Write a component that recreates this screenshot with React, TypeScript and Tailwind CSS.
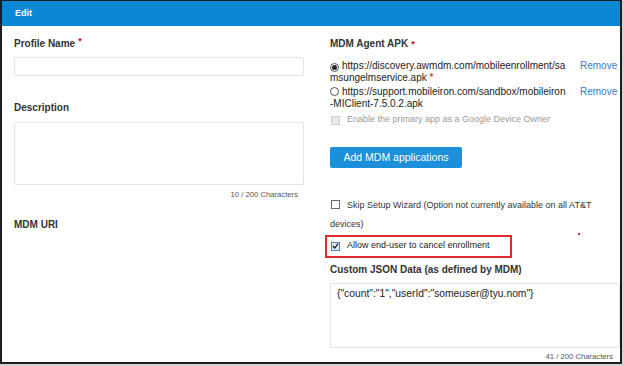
import React from "react";

const F = { fontFamily: '"Liberation Sans", Arial, sans-serif' };

function Radio({ checked }: { checked?: boolean }) {
  return (
    <span className="inline-flex items-center justify-center w-[9px] h-[9px] rounded-full border border-[#555] bg-white mr-[3px] align-[-1px]">
      {checked && <span className="w-[5px] h-[5px] rounded-full bg-[#222]" />}
    </span>
  );
}

function Box({ kind }: { kind: "off" | "disabled" | "on" }) {
  if (kind === "on") {
    return (
      <span className="inline-flex w-[9px] h-[9px] border border-[#4a87c4] bg-[#dbeafa] items-center justify-center">
        <svg width="8" height="8" viewBox="0 0 8 8">
          <path d="M1 4 L3.2 6.3 L7 1.2" stroke="#1a1a1a" strokeWidth="1.4" fill="none" />
        </svg>
      </span>
    );
  }
  if (kind === "disabled") {
    return <span className="inline-block w-[9px] h-[9px] border border-[#cfcfcf] bg-[#e9e9e9]" />;
  }
  return <span className="inline-block w-[9px] h-[9px] border border-[#6b6b6b] bg-white" />;
}

export default function App() {
  return (
    <div className="w-[624px] h-[366px] bg-[#d4d4d4]" style={F}>
      <div className="w-[622px] h-[364px] border-l-2 border-t border-r-2 border-b-2 border-[#1e1e1e] bg-white overflow-hidden flex flex-col">
        <div className="h-[25px] bg-[#0a88d4] flex items-center pl-[13px] text-white text-[9px] font-bold">Edit</div>
        <div className="flex pl-[12px] gap-[26px] text-[#333]">
          {/* Left column */}
          <div className="w-[290px] flex flex-col">
            <div className="mt-[12px] h-[12px] leading-[12px] text-[10px] font-bold">
              Profile Name<span className="text-[#d0021b] text-[9px] relative -top-[3px] ml-[3px]">*</span>
            </div>
            <div className="mt-[7px] h-[19px] border border-[#e3e3e3] rounded-[2px]" />
            <div className="mt-[26px] h-[12px] leading-[12px] text-[10px] font-bold">Description</div>
            <div className="mt-[8px] h-[63px] border border-[#e3e3e3] rounded-[2px]" />
            <div className="mt-[5px] h-[10px] leading-[10px] text-[7.7px] text-[#555] text-right pr-[6px]">10 / 200 Characters</div>
            <div className="mt-[19px] h-[12px] leading-[12px] text-[10px] font-bold">MDM URI</div>
          </div>
          {/* Right column */}
          <div className="w-[290px] flex flex-col">
            <div className="mt-[12px] h-[12px] leading-[12px] text-[10px] font-bold">
              MDM Agent APK<span className="text-[#d0021b] text-[9px] ml-[3px]">*</span>
            </div>
            <div className="mt-[10px] flex text-[10px] leading-[12px] text-[#222]">
              <div className="flex-1 whitespace-nowrap">
                <div><Radio checked />https://discovery.awmdm.com/mobileenrollment/sa</div>
                <div>msungelmservice.apk <span className="text-[#d0021b]">*</span></div>
              </div>
              <div className="w-[40px] text-[#3a7cc2] whitespace-nowrap">Remove</div>
            </div>
            <div className="mt-[1.5px] flex text-[10px] leading-[12px] text-[#222]">
              <div className="flex-1 whitespace-nowrap">
                <div><Radio />https://support.mobileiron.com/sandbox/mobileiron</div>
                <div>-MIClient-7.5.0.2.apk</div>
              </div>
              <div className="w-[40px] text-[#3a7cc2] whitespace-nowrap">Remove</div>
            </div>
            <div className="mt-[4.5px] h-[12px] flex items-center text-[9px] text-[#9a9a9a]">
              <span className="ml-[1px] flex"><Box kind="disabled" /></span>
              <span className="ml-[7px]">Enable the primary app as a Google Device Owner</span>
            </div>
            <div className="mt-[21px] w-[132px] h-[21px] bg-[#1b8fd9] rounded-[2px] text-white text-[10.5px] flex items-center justify-center">
              Add MDM applications
            </div>
            <div className="mt-[27.5px] text-[9px] leading-[18px] text-[#333]">
              <span className="ml-[1px] align-[-1px]"><Box kind="off" /></span>
              <span className="ml-[7px]">Skip Setup Wizard (Option not currently available on all AT&amp;T</span>
              <div>devices)</div>
            </div>
            <div className="relative">
              <div className="mt-[2px] -ml-[5px] w-[187px] h-[23px] border-2 border-[#e02a2f] flex items-center pl-[4px] text-[9px] text-[#222]">
                <Box kind="on" />
                <span className="ml-[7px]">Allow end-user to cancel enrollment</span>
              </div>
              <div className="absolute left-[248px] top-[0px] w-[2px] h-[2px] bg-[#e02a2f]" />
            </div>
            <div className="mt-[6px] h-[12px] leading-[12px] text-[10px] font-bold">Custom JSON Data (as defined by MDM)</div>
            <div className="mt-[7px] h-[65px] border border-[#e3e3e3] rounded-[2px] px-[6px] pt-[4px] text-[10.3px] leading-[12px] text-[#222]">
              {'{"count":"1","userId":"someuser@tyu.nom"}'}
            </div>
            <div className="mt-[4px] h-[10px] leading-[10px] text-[7.7px] text-[#555] text-right pr-[7px]">41 / 200 Characters</div>
          </div>
        </div>
      </div>
    </div>
  );
}
